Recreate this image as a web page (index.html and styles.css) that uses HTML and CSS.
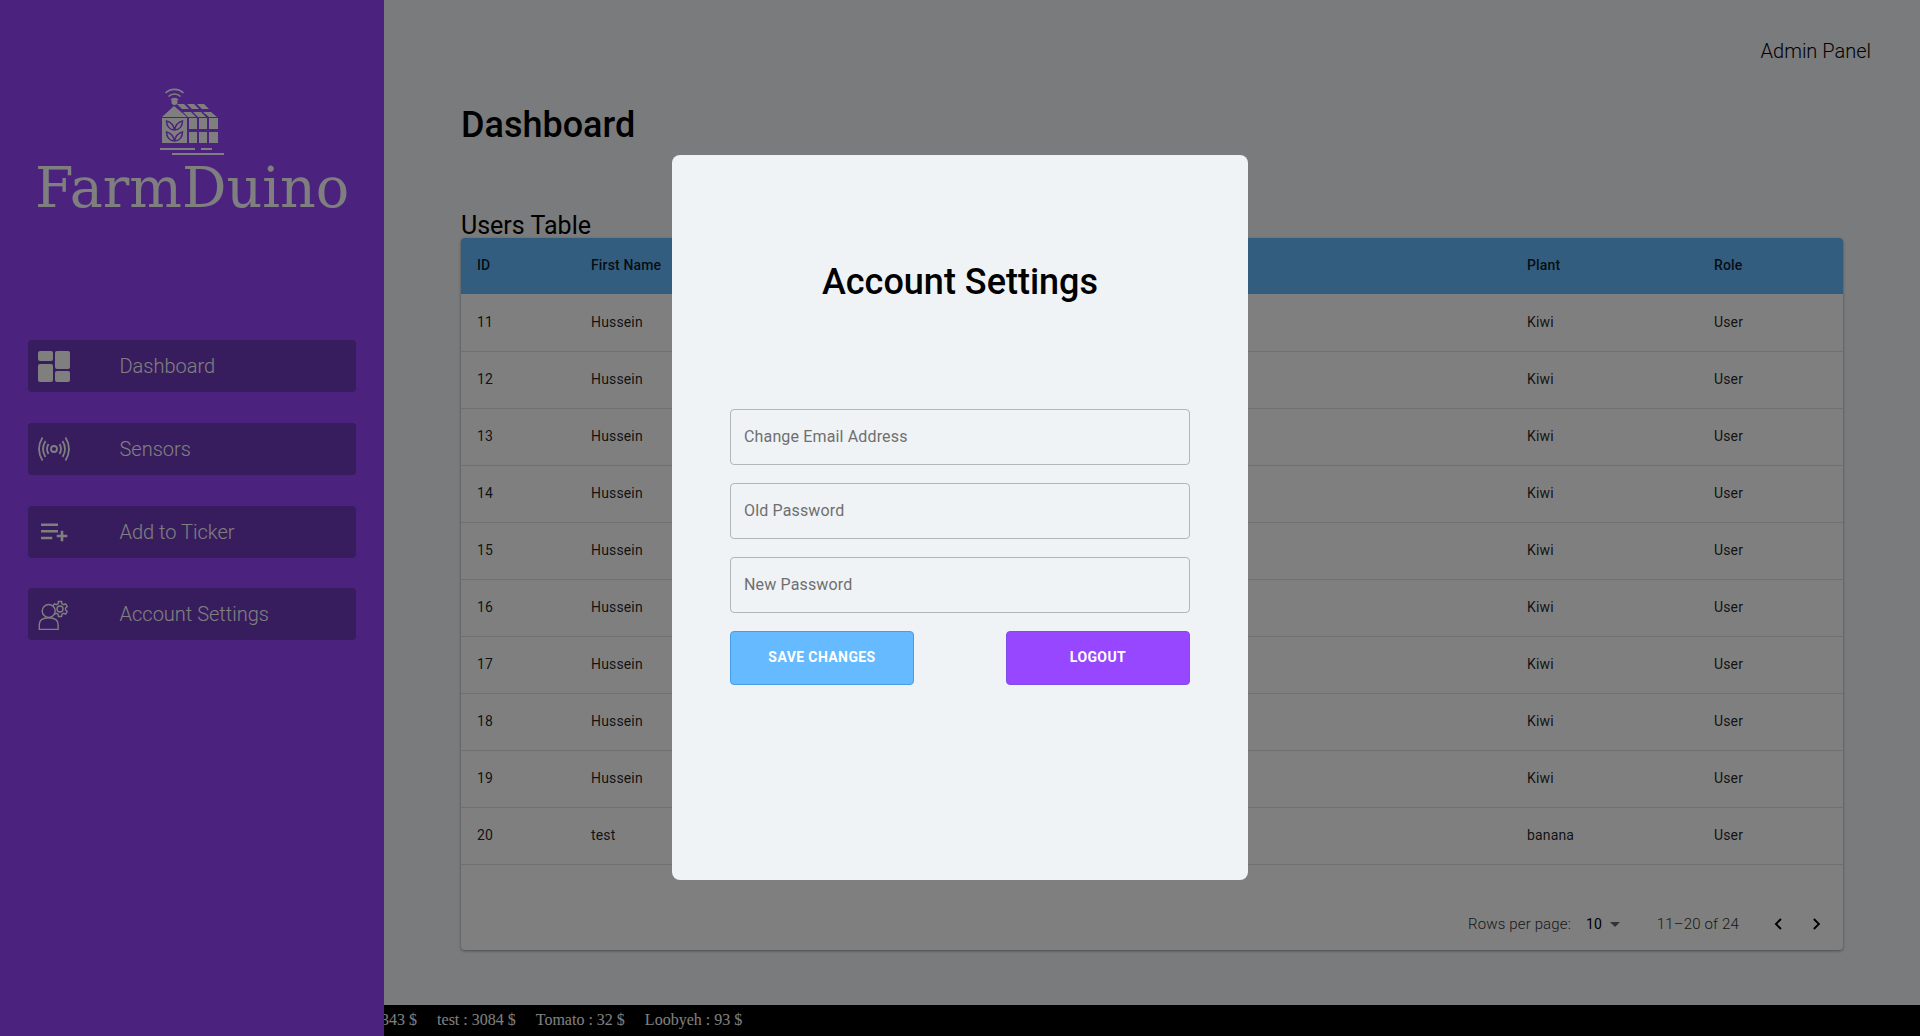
FILE: index.html
```html
<!DOCTYPE html>
<html lang="en">
<head>
  <meta charset="UTF-8" />
  <meta name="viewport" content="width=device-width, initial-scale=1.0"/>
  <title>FarmDuino Admin Panel</title>
  <link rel="stylesheet" href="styles.css">
</head>
<body>

  <div class="sidebar">
    <div class="logo">
      <svg class="logo-icon" viewBox="155 80 75 78" width="75" height="78">
        <path class="logo-wifi" d="M165.500 93a13 13 0 0 1 18 0M168.500 96.500a8.500 8.500 0 0 1 12 0M171 100a5 5 0 0 1 7 0"/>
        <circle class="logo-fill" cx="174.500" cy="102" r="3"/>
        <path class="logo-fill" d="M162 117l12-11 13 11zM162 118h25v25h-25zM189 118h8v11h-8zM199 118h8v11h-8zM209 118h9v11h-9zM189 132h8v11h-8zM199 132h8v11h-8zM209 132h9v11h-9z"/>
        <path class="logo-fill" d="M177 104h7l5 5h-7zM187 104h7l5 5h-7zM197 104h7l5 5h-7zM183 112h8l5 5h-8zM193 112h8l5 5h-8zM203 112h8l6 5h-8z"/>
        <path class="logo-cut" d="M174.500 130c-1-5-4-8-8-9 0 5 3 9 8 9zM174.500 130c1-5 4-8 8-9 0 5-3 9-8 9zM174.500 141c-1-5-4-8-8-9 0 5 3 9 8 9zM174.500 141c1-5 4-8 8-9 0 5-3 9-8 9z"/>
        <path class="logo-fill" d="M160 148h35v2h-35zM201 148h11v2h-11zM172 153h52v2h-52z"/>
      </svg>
      <div class="logo-text">FarmDuino</div>
    </div>

    <nav class="nav">
      <a class="nav-btn">
        <span class="nav-icon">
          <svg viewBox="0 0 32 32" width="32" height="32">
            <rect class="icon-fill" x="0" y="1" width="15" height="10" rx="2"/>
            <rect class="icon-fill" x="0" y="14" width="15" height="18" rx="2"/>
            <rect class="icon-fill" x="17" y="1" width="15" height="18" rx="2"/>
            <rect class="icon-fill" x="17" y="21" width="15" height="11" rx="2"/>
          </svg>
        </span>
        Dashboard
      </a>
      <a class="nav-btn">
        <span class="nav-icon">
          <svg viewBox="0 0 32 32" width="32" height="32">
            <circle class="icon-bold" cx="16" cy="16" r="3"/>
            <path class="icon-bold" d="M10.500 11Q7.500 16 10.500 21M21.500 11Q24.500 16 21.500 21M7.500 8Q2.500 16 7.500 24M24.500 8Q29.500 16 24.500 24M4.500 4.500Q-2.500 16 4.500 27.500M27.500 4.500Q34.500 16 27.500 27.500"/>
          </svg>
        </span>
        Sensors
      </a>
      <a class="nav-btn">
        <span class="nav-icon">
          <svg viewBox="0 0 32 32" width="32" height="32">
            <path class="icon-fill" d="M3 7.500h17V10H3zM3 14h17v2.500H3zM3 20.700h11.300v2.500H3zM22.700 14.700h2.600v4h4v2.600h-4v4h-2.600v-4h-4v-2.600h4z"/>
          </svg>
        </span>
        Add to Ticker
      </a>
      <a class="nav-btn">
        <span class="nav-icon">
          <svg viewBox="0 0 32 32" width="32" height="32">
            <path class="icon-line" d="M20.080 5.740L20.420 3.570H23.580L23.920 5.740L25.600 6.710L27.650 5.910L29.230 8.650L27.510 10.030V11.970L29.230 13.350L27.650 16.090L25.600 15.290L23.920 16.260L23.580 18.430H20.420L20.080 16.260L18.400 15.290L16.350 16.090L14.770 13.350L16.490 11.970V10.030L14.770 8.650L16.350 5.910L18.400 6.710z"/>
            <circle class="icon-line" cx="22" cy="11" r="3"/>
            <circle class="icon-mask" cx="10.700" cy="13" r="6.500"/>
            <path class="icon-line" d="M1.300 31.500v-5c0-4.500 3.500-6.800 9.400-6.800s9.400 2.300 9.400 6.800v5z"/>
          </svg>
        </span>
        Account Settings
      </a>
    </nav>
  </div>

  <div class="main">
    <div class="page">
      <div class="topbar">Admin Panel</div>
      <div class="content">
        <h1>Dashboard</h1>
        <h2>Users Table</h2>
        <div class="table-box">
          <table>
            <thead>
              <tr><th class="col-id">ID</th><th class="col-name">First Name</th><th></th><th class="col-plant">Plant</th><th class="col-role">Role</th></tr>
            </thead>
            <tbody>
              <tr><td>11</td><td>Hussein</td><td></td><td>Kiwi</td><td>User</td></tr>
              <tr><td>12</td><td>Hussein</td><td></td><td>Kiwi</td><td>User</td></tr>
              <tr><td>13</td><td>Hussein</td><td></td><td>Kiwi</td><td>User</td></tr>
              <tr><td>14</td><td>Hussein</td><td></td><td>Kiwi</td><td>User</td></tr>
              <tr><td>15</td><td>Hussein</td><td></td><td>Kiwi</td><td>User</td></tr>
              <tr><td>16</td><td>Hussein</td><td></td><td>Kiwi</td><td>User</td></tr>
              <tr><td>17</td><td>Hussein</td><td></td><td>Kiwi</td><td>User</td></tr>
              <tr><td>18</td><td>Hussein</td><td></td><td>Kiwi</td><td>User</td></tr>
              <tr><td>19</td><td>Hussein</td><td></td><td>Kiwi</td><td>User</td></tr>
              <tr><td>20</td><td>test</td><td></td><td>banana</td><td>User</td></tr>
            </tbody>
          </table>
          <div class="pagination">
            <span class="rows-label">Rows per page:</span>
            <span class="rows-value">10</span>
            <span class="rows-arrow"></span>
            <span class="rows-range">11–20 of 24</span>
            <svg class="page-arrow" viewBox="0 0 24 24" width="24" height="24"><path d="M15.410 7.410L14 6l-6 6 6 6 1.410-1.410L10.830 12z"/></svg>
            <svg class="page-arrow" viewBox="0 0 24 24" width="24" height="24"><path d="M10 6L8.590 7.410 13.170 12l-4.580 4.590L10 18l6-6z"/></svg>
          </div>
        </div>
      </div>
    </div>
    <div class="ticker">
      <span class="ticker-item ticker-first">Cucumber : 343 $</span>
      <span class="ticker-item">test : 3084 $</span>
      <span class="ticker-item">Tomato : 32 $</span>
      <span class="ticker-item">Loobyeh : 93 $</span>
    </div>
  </div>

  <div class="backdrop">
    <div class="modal">
      <h2 class="modal-title">Account Settings</h2>
      <form class="modal-form">
        <input type="text" placeholder="Change Email Address" />
        <input type="password" placeholder="Old Password" />
        <input type="password" placeholder="New Password" />
        <div class="modal-actions">
          <button type="submit" class="save-btn">Save Changes</button>
          <button type="button" class="logout-btn">Logout</button>
        </div>
      </form>
    </div>
  </div>

</body>
</html>
```

FILE: styles.css
```css
* {
  box-sizing: border-box;
}

body {
  font-family: Roboto, Arial, sans-serif;
  background: #f4f6f9;
  margin: 0;
  height: 1036px;
  display: flex;
  overflow: hidden;
}

/* sidebar */
.sidebar {
  width: 384px;
  flex-shrink: 0;
  background: #9747ff;
  padding: 0 28px;
}

.logo {
  height: 340px;
  padding-top: 80px;
  display: flex;
  flex-direction: column;
  align-items: center;
}

.logo-icon {
  margin-left: 1px;
}

.logo-fill {
  fill: #fff;
}

.logo-cut {
  fill: none;
  stroke: #9747ff;
  stroke-width: 1.500;
}

.logo-wifi {
  fill: none;
  stroke: #fff;
  stroke-width: 1.700;
}

.logo-text {
  font-family: "DejaVu Serif", "Liberation Serif", serif;
  font-weight: 400;
  font-size: 55.500px;
  line-height: 60px;
  color: #fff;
  white-space: nowrap;
}

.nav {
  display: flex;
  flex-direction: column;
  gap: 30.800px;
}

.nav-btn {
  height: 52px;
  background: #6e38bc;
  border-radius: 4px;
  display: flex;
  align-items: center;
  color: #fff;
  font-size: 20px;
  font-weight: 300;
}

.nav-icon {
  width: 91.500px;
  padding-left: 10px;
  display: flex;
}

.icon-fill {
  fill: #fff;
}

.icon-line {
  fill: none;
  stroke: #fff;
  stroke-width: 1.400;
}

.icon-mask {
  fill: #6e38bc;
  stroke: #fff;
  stroke-width: 1.400;
}

.icon-bold {
  fill: none;
  stroke: #fff;
  stroke-width: 1.800;
}

/* main area */
.main {
  flex: 1;
  display: flex;
  flex-direction: column;
  min-width: 0;
}

.page {
  flex: 1;
}

.topbar {
  padding: 38px 49px 0;
  text-align: right;
  font-size: 20px;
  font-weight: 300;
  line-height: 26px;
  color: #000;
}

.content {
  padding: 0 77px;
}

h1 {
  margin: 39px 0 0;
  font-size: 36px;
  line-height: 44px;
  font-weight: 500;
  color: #000;
}

.content h2 {
  margin: 66px 0 0;
  font-size: 25px;
  line-height: 25px;
  font-weight: 400;
  color: #000;
}

.table-box {
  background: #fff;
  border-radius: 4px;
  height: 712px;
  box-shadow: 0 1px 3px rgba(0, 0, 0, 0.4);
  overflow: hidden;
}

table {
  width: 100%;
  border-collapse: collapse;
  table-layout: fixed;
  font-size: 14px;
  letter-spacing: 0.15px;
  color: rgba(0, 0, 0, 0.87);
}

th {
  height: 56px;
  padding: 0 16px 2px;
  background: #66baff;
  text-align: left;
  font-weight: 500;
}

td {
  height: 57px;
  padding: 0 16px 1px;
  border-bottom: 1px solid #e0e0e0;
}

.col-id {
  width: 114px;
}

.col-name {
  width: 200px;
}

.col-plant {
  width: 187px;
}

.col-role {
  width: 145px;
}

.pagination {
  display: flex;
  align-items: center;
  height: 86px;
  padding: 32px 0 0 1007px;
  font-size: 15px;
  letter-spacing: 0.15px;
  color: #333;
  font-weight: 300;
}

.rows-label {
  width: 124px;
}

.rows-value {
  font-size: 14px;
  font-weight: 400;
  color: #000;
  width: 25px;
}

.rows-arrow {
  border-left: 5px solid transparent;
  border-right: 5px solid transparent;
  border-top: 5px solid #666;
  margin-right: 37px;
  margin-top: 2px;
}

.rows-range {
  width: 116px;
}

.page-arrow {
  fill: #000;
  margin-right: 15px;
}

/* bottom ticker */
.ticker {
  height: 31px;
  padding-bottom: 2px;
  flex-shrink: 0;
  background: #000;
  color: #fff;
  font-family: "Liberation Serif", "Times New Roman", serif;
  font-size: 16px;
  display: flex;
  align-items: center;
  gap: 20px;
  overflow: hidden;
  white-space: nowrap;
}

.ticker-first {
  margin-left: -82px;
}

/* settings popup */
.backdrop {
  position: fixed;
  inset: 0;
  padding-bottom: 2px;
  background: rgba(0, 0, 0, 0.5);
  display: flex;
  align-items: center;
  justify-content: center;
}

.modal {
  width: 576px;
  height: 725px;
  background: #eff3f6;
  border-radius: 8px;
  padding: 0 58px;
}

.modal-title {
  margin: 0;
  padding-top: 104px;
  text-align: center;
  font-size: 36px;
  line-height: 46px;
  font-weight: 500;
  color: #000;
}

.modal-form {
  margin-top: 104px;
  display: flex;
  flex-direction: column;
  gap: 18px;
}

input {
  width: 100%;
  height: 56px;
  padding: 0 13px;
  border: 1px solid #b3b6b9;
  border-radius: 4px;
  background: transparent;
  font-family: Roboto, Arial, sans-serif;
  font-size: 16px;
  letter-spacing: 0.15px;
}

input::placeholder {
  color: #6f6f6f;
  opacity: 1;
}

.modal-actions {
  display: flex;
  justify-content: space-between;
}

.modal-actions button {
  width: 184px;
  height: 54px;
  padding-bottom: 2px;
  border-radius: 4px;
  color: #fff;
  font-family: Roboto, Arial, sans-serif;
  font-size: 14px;
  font-weight: 700;
  letter-spacing: 0.4px;
  text-transform: uppercase;
  cursor: pointer;
}

.save-btn {
  background: #66baff;
  border: 1px solid #459fe8;
}

.logout-btn {
  background: #9747ff;
  border: 1px solid #7f4de8;
}
```
